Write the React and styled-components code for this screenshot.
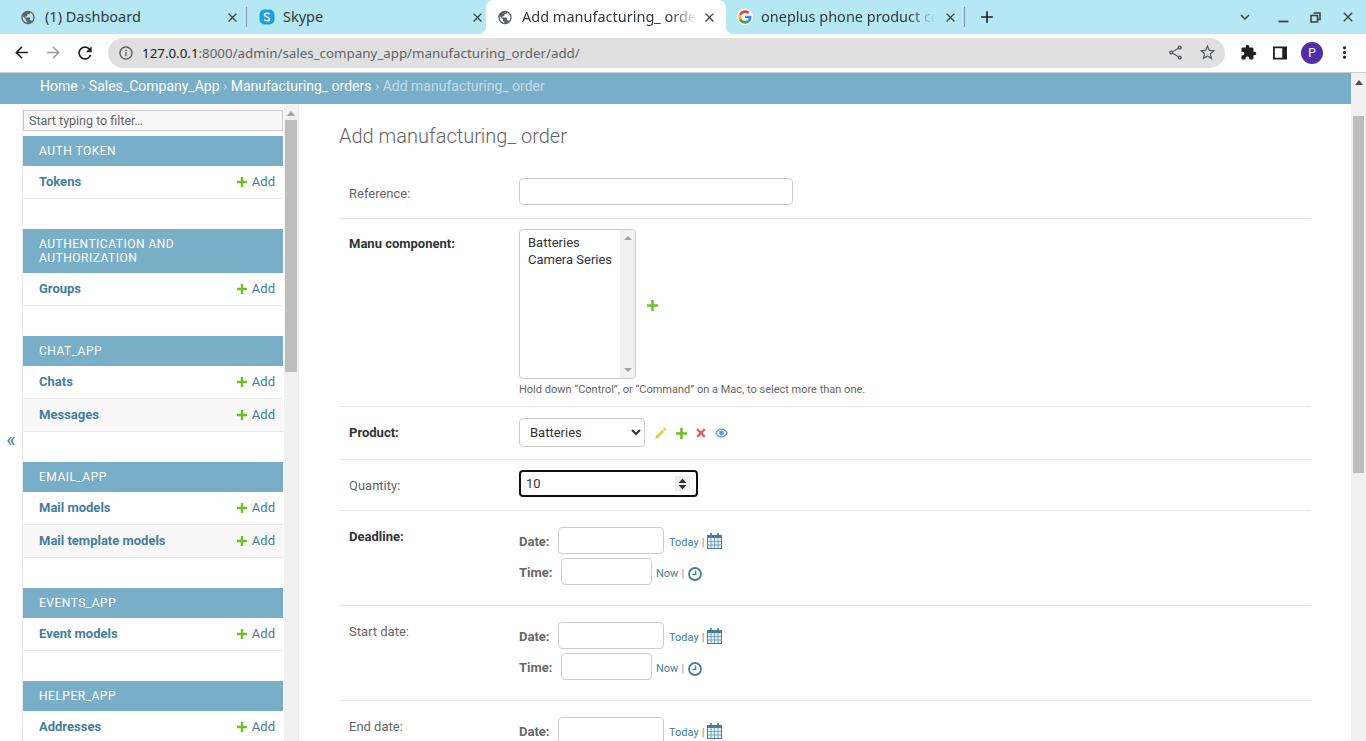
import React from "react";
import styled, { createGlobalStyle } from "styled-components";
import {
  MdArrowBack,
  MdArrowForward,
  MdRefresh,
  MdInfoOutline,
  MdOutlineShare,
  MdStarBorder,
  MdExtension,
  MdPublic,
  MdMoreVert,
  MdClose,
  MdAdd,
  MdExpandMore,
} from "react-icons/md";

const GlobalStyle = createGlobalStyle`
  html, body {
    margin: 0;
    height: 100%;
    overflow: hidden;
    background: #fff;
  }
  * {
    box-sizing: border-box;
  }
`;

const Screen = styled.div`
  width: 1366px;
  height: 741px;
  display: flex;
  flex-direction: column;
  overflow: hidden;
  font-family: Roboto, "Liberation Sans", sans-serif;
`;

/* browser chrome */
const TabStrip = styled.div`
  height: 34px;
  flex: none;
  display: flex;
  align-items: stretch;
  padding-left: 8px;
  background: #b6e8f4;
  font-family: "Noto Sans", "Open Sans", sans-serif;
`;

const Tab = styled.div`
  position: relative;
  width: 239px;
  display: flex;
  align-items: center;
  padding-left: ${(props) => props.inset || 12}px;
  color: #33383d;
  background: ${(props) => (props.active ? "#fff" : "transparent")};
  border-radius: ${(props) => (props.active ? "8px 8px 0 0" : "0")};
  ${(props) =>
    props.divider &&
    `
    &::after {
      content: "";
      position: absolute;
      right: 0;
      top: 7px;
      width: 1px;
      height: 20px;
      background: #7d9aa2;
    }
  `}
  ${(props) =>
    props.active &&
    `
    width: 240px;
    &::before, &::after {
      content: "";
      position: absolute;
      bottom: 0;
      width: 8px;
      height: 8px;
      background: radial-gradient(circle at 0 0, #b6e8f4 8px, #fff 8.5px);
    }
    &::before { left: -8px; }
    &::after { right: -8px; background: radial-gradient(circle at 100% 0, #b6e8f4 8px, #fff 8.5px); }
  `}
`;

const TabIcon = styled.span`
  width: 16px;
  height: 16px;
  flex: none;
  margin-right: ${(props) => props.gap || 9}px;
  display: flex;
  align-items: center;
  justify-content: center;
  color: #5f6368;
`;

const TabTitle = styled.span`
  width: ${(props) => props.width || 170}px;
  margin-top: -2px;
  font-size: 14.5px;
  white-space: nowrap;
  overflow: hidden;
  ${(props) =>
    props.fade &&
    `
    -webkit-mask-image: linear-gradient(to right, #000 85%, transparent 100%);
    mask-image: linear-gradient(to right, #000 85%, transparent 100%);
  `}
`;

const TabClose = styled.span`
  margin-left: auto;
  margin-right: ${(props) => props.right || 8}px;
  display: flex;
  color: #3c4043;
`;

const NewTab = styled.span`
  margin-left: 12px;
  display: flex;
  align-items: center;
  color: #202124;
`;

const WindowControls = styled.div`
  margin-left: auto;
  display: flex;
  align-items: center;
  color: #3c4043;
`;

const WindowButton = styled.span`
  width: ${(props) => props.width}px;
  display: flex;
  justify-content: center;
  align-items: center;
`;

const Toolbar = styled.div`
  height: 39px;
  flex: none;
  display: flex;
  align-items: center;
  padding: 0 0 1px 5px;
  background: #fff;
  border-bottom: 1px solid #c9cbcd;
`;

const NavButton = styled.span`
  width: 32px;
  display: flex;
  justify-content: center;
  color: ${(props) => (props.off ? "#9a9da0" : "#202124")};
`;

const AddressBar = styled.div`
  width: 1117px;
  height: 30px;
  margin-left: 7px;
  display: flex;
  align-items: center;
  padding: 0 8px 0 10px;
  border-radius: 15px;
  background: #e0e0e0;
  color: #5a5d61;
`;

const Url = styled.span`
  margin-left: 8px;
  font-family: "Noto Sans", "Open Sans", sans-serif;
  font-size: 13.35px;
  color: #5f6368;
  white-space: nowrap;
  b {
    font-weight: 400;
    color: #202124;
  }
`;

const BarIcons = styled.span`
  margin-left: auto;
  display: flex;
  align-items: center;
  gap: 14px;
`;

const ToolIcons = styled.div`
  display: flex;
  align-items: center;
  margin-left: 15px;
  color: #202124;
`;

const Avatar = styled.span`
  width: 22px;
  height: 22px;
  margin: 0 12px 0 13px;
  display: flex;
  align-items: center;
  justify-content: center;
  border-radius: 50%;
  background: #4f2ea8;
  color: #fff;
  font-size: 12px;
`;

/* page */
const Viewport = styled.div`
  flex: 1;
  min-height: 0;
  display: flex;
`;

const Page = styled.div`
  flex: 1;
  min-width: 0;
  display: flex;
  flex-direction: column;
`;

const Breadcrumbs = styled.div`
  height: 31px;
  flex: none;
  display: flex;
  align-items: center;
  padding: 0 40px 5px;
  background: #79aec8;
  font-size: 14px;
  color: #c4dce8;
  white-space: pre;
  a {
    color: #fff;
  }
`;

const Scrollbar = styled.div`
  width: ${(props) => props.width}px;
  flex: none;
  display: flex;
  flex-direction: column;
  align-items: center;
  background: ${(props) => props.track};
  padding-top: ${(props) => props.top}px;
`;

const ScrollArrow = styled.span`
  width: 0;
  height: 0;
  flex: none;
  border-left: 4px solid transparent;
  border-right: 4px solid transparent;
  border-bottom: 5px solid ${(props) => props.color};
`;

const ScrollThumb = styled.span`
  width: ${(props) => props.width}px;
  height: ${(props) => props.height}px;
  flex: none;
  margin-top: ${(props) => props.gap}px;
  background: #bdbdbd;
`;

const Columns = styled.div`
  flex: 1;
  min-height: 0;
  display: flex;
  overflow: hidden;
`;

const ToggleNav = styled.div`
  width: 23px;
  flex: none;
  display: flex;
  align-items: center;
  justify-content: center;
  padding-top: 34px;
  border-right: 1px solid #eaeaea;
  color: #447e9b;
  font-size: 20px;
  line-height: 1;
`;

const Sidebar = styled.div`
  width: 261px;
  flex: none;
  padding-top: 6px;
`;

const FilterInput = styled.input`
  display: block;
  width: 260px;
  height: 21px;
  margin-bottom: 5px;
  padding: 0 5px;
  border: 1px solid #ccc;
  background: #f8f8f8;
  font: 12.5px Roboto, sans-serif;
  &::placeholder {
    color: #666;
    opacity: 1;
  }
`;

const Module = styled.div`
  width: 260px;
  margin-bottom: 30px;
`;

const Caption = styled.div`
  padding: 8px 16px;
  background: #79aec8;
  color: #fff;
  font-size: 12px;
  line-height: 14px;
  letter-spacing: 0.5px;
  text-transform: uppercase;
`;

const ModelRow = styled.div`
  height: 33px;
  display: flex;
  align-items: center;
  justify-content: space-between;
  padding: 0 8px 1px 16px;
  border-bottom: 1px solid #e9e9e9;
  background: ${(props) => (props.shaded ? "#f8f8f8" : "#fff")};
  font-size: 13px;
  color: #447e9b;
`;

const ModelName = styled.span`
  font-weight: 700;
`;

const AddLink = styled.span`
  display: flex;
  align-items: center;
  gap: 4.5px;
`;

const SideBorder = styled.div`
  width: 1px;
  flex: none;
  background: #eaeaea;
`;

const Content = styled.div`
  flex: 1;
  min-width: 0;
  padding: 20px 40px 0;
  color: #333;
`;

const Title = styled.h1`
  margin: 0 0 19px;
  font-size: 20px;
  line-height: 24px;
  font-weight: 300;
  color: #666;
`;

const FormRow = styled.div`
  display: flex;
  height: ${(props) => props.height}px;
  padding: ${(props) => props.top}px 10px 0;
  border-bottom: 1px solid #e8e8e8;
  flex: none;
  &:last-child {
    border-bottom: 0;
  }
`;

const FieldLabel = styled.label`
  width: 170px;
  flex: none;
  padding-top: ${(props) => props.offset}px;
  font-size: 13px;
  line-height: 16px;
  font-weight: ${(props) => (props.required ? 700 : 400)};
  color: ${(props) => (props.required ? "#333" : "#666")};
`;

const TextInput = styled.input`
  display: block;
  width: ${(props) => props.width}px;
  height: ${(props) => props.height || 27}px;
  padding: 2px 8px;
  border: 1px solid #ccc;
  border-radius: 4px;
  background: #fff;
  outline: 0;
`;

const PickerBox = styled.div`
  display: flex;
  align-items: flex-start;
`;

const ListBox = styled.div`
  width: 117px;
  height: 150px;
  display: flex;
  justify-content: space-between;
  border: 1px solid #ccc;
  border-radius: 4px;
  overflow: hidden;
  font-size: 13px;
  color: #333;
`;

const ListOptions = styled.div`
  padding: 4px 8px;
  line-height: 17px;
  white-space: nowrap;
`;

const ListScroll = styled.div`
  width: 15px;
  display: flex;
  flex-direction: column;
  align-items: center;
  justify-content: space-between;
  padding: 6px 0;
  background: #f1f1f1;
`;

const ListArrow = styled.span`
  width: 0;
  height: 0;
  border-left: 4px solid transparent;
  border-right: 4px solid transparent;
  border-${(props) => (props.down ? "top" : "bottom")}: 4px solid #a3a3a3;
`;

const HelpText = styled.div`
  margin-top: 4px;
  font-size: 11px;
  line-height: 14px;
  color: #666;
`;

const RelatedIcon = styled.span`
  display: flex;
  flex: none;
  margin: ${(props) => props.margin || "0"};
`;

const SelectBox = styled.select`
  width: 126px;
  height: 29px;
  padding: 0 6px;
  border: 1px solid #ccc;
  border-radius: 4px;
  background: #fff;
  font: 13px Roboto, sans-serif;
  color: #333;
`;

const RelatedLinks = styled.div`
  display: flex;
  align-items: center;
  height: 29px;
  padding: 1px 0 0 10px;
  gap: 9px;
`;

const NumberBox = styled.div`
  width: 179px;
  height: 27px;
  display: flex;
  align-items: center;
  justify-content: space-between;
  padding: 0 6px 0 5px;
  border: 2px solid #101010;
  border-radius: 4px;
  font-size: 13px;
  color: #333;
`;

const Spinner = styled.span`
  width: 15px;
  height: 15px;
  display: flex;
  align-items: center;
  justify-content: center;
  background: #efefef;
`;

const DateTimeStack = styled.div`
  display: flex;
  flex-direction: column;
  gap: 4px;
  padding-top: 5px;
`;

const DateLine = styled.div`
  display: flex;
  align-items: center;
  height: 27px;
`;

const DateLabel = styled.span`
  width: ${(props) => props.width}px;
  flex: none;
  padding-top: 2px;
  font-size: 13px;
  font-weight: 700;
  color: #666;
`;

const Shortcut = styled.span`
  margin-left: ${(props) => props.gap}px;
  display: flex;
  align-items: center;
  font-size: 11px;
  padding-top: 4px;
  color: #447e9b;
  i {
    margin: 0 3px;
    font-style: normal;
    color: #888;
  }
`;

/* django admin's little drawings */
function PlusIcon({ size = 10 }) {
  return (
    <svg width={size} height={size} viewBox="0 0 10 10">
      <path d="M3.8 0h2.4v3.8H10v2.4H6.2V10H3.8V6.2H0V3.8h3.8z" fill="#70bf2b" />
    </svg>
  );
}

function PencilIcon() {
  return (
    <svg width="12" height="12" viewBox="0 0 12 12">
      <path d="M9.3 .3l2.4 2.4-1.3 1.3L8 1.600z" fill="#efb80b" opacity=".85" />
      <path d="M7.300 2.300l2.400 2.400-6 6-3.400 1 1-3.400z" fill="#efb80b" opacity=".85" />
      <path d="M2.200 8.200l6-6M3.800 9.800l6-6" stroke="#fff" strokeWidth=".5" />
    </svg>
  );
}

function DeleteIcon() {
  return (
    <svg width="10" height="10" viewBox="0 0 10 10">
      <path d="M2 .3L5 3.3 8 .3 9.7 2 6.7 5l3 3L8 9.7l-3-3-3 3L.3 8l3-3-3-3z" fill="#dd4646" opacity=".85" />
    </svg>
  );
}

function EyeIcon() {
  return (
    <svg width="13" height="10" viewBox="0 0 13 10">
      <path d="M6.5 0.5C3.6.5 1.3 2.4.2 5c1.1 2.6 3.4 4.5 6.3 4.5s5.2-1.9 6.3-4.5C11.7 2.4 9.4.5 6.5.5zm0 1.3c2.1 0 3.9 1.3 4.9 3.2-1 1.9-2.8 3.2-4.9 3.2S2.6 6.9 1.6 5c1-1.9 2.8-3.2 4.9-3.2z" fill="#5f97d8" />
      <circle cx="6.5" cy="5" r="2.4" fill="#5f97d8" />
    </svg>
  );
}

function CalendarIcon() {
  return (
    <RelatedIcon margin="-3px 0 0 0">
      <svg width="15" height="16" viewBox="0 0 15 16">
        <rect x=".5" y="2.5" width="14" height="13" fill="#e4eef3" stroke="#447e9b" />
        <rect x="0" y="2" width="15" height="3" fill="#447e9b" />
        <path d="M4 0v3.500M11 0v3.500" stroke="#447e9b" strokeWidth="1.6" />
        <path d="M4 5v10M7.500 5v10M11 5v10M.5 8.500h14M.5 12h14" stroke="#447e9b" strokeWidth=".6" />
      </svg>
    </RelatedIcon>
  );
}

function ClockIcon() {
  return (
    <svg width="14" height="14" viewBox="0 0 14 14">
      <circle cx="7" cy="7" r="6" fill="#fff" stroke="#447e9b" strokeWidth="1.8" />
      <path d="M7.6 3.4v4H4.4" fill="none" stroke="#447e9b" strokeWidth="1.4" />
    </svg>
  );
}

function SkypeIcon() {
  return (
    <svg width="16" height="16" viewBox="0 0 16 16">
      <rect x="0.5" y="0.5" width="15" height="15" rx="5" fill="#1a9fe0" />
      <path d="M10.6 5.2C10 4.5 9.1 4.2 8 4.2c-1.5 0-2.6.8-2.6 1.9 0 2.5 5.2 1.4 5.2 3.8 0 1.1-1.1 1.9-2.6 1.9-1.2 0-2.1-.4-2.8-1.2" fill="none" stroke="#fff" strokeWidth="1.5" />
    </svg>
  );
}

function GoogleIcon() {
  return (
    <svg width="16" height="16" viewBox="0 0 48 48">
      <circle cx="24" cy="24" r="24" fill="#fff" />
      <path fill="#ea4335" d="M24 12c3 0 5.700 1 7.800 3l5.800-5.800C34 5.900 29.400 4 24 4 16.200 4 9.500 8.500 6.200 15l6.800 5.300C14.600 15.400 18.900 12 24 12z" />
      <path fill="#4285f4" d="M43.500 24.500c0-1.400-.1-2.700-.4-4H24v7.600h11c-.5 2.500-1.900 4.600-4 6l6.500 5c3.800-3.500 6-8.700 6-14.600z" />
      <path fill="#fbbc05" d="M13 27.700c-.4-1.200-.6-2.400-.6-3.700s.2-2.500.6-3.700L6.200 15C4.800 17.700 4 20.800 4 24s.8 6.300 2.200 9z" />
      <path fill="#34a853" d="M24 44c5.400 0 9.900-1.800 13.500-4.900l-6.500-5c-1.800 1.200-4.200 2-7 2-5.100 0-9.400-3.400-11-8.400L6.200 33C9.500 39.500 16.200 44 24 44z" />
    </svg>
  );
}

function SidePanelIcon() {
  return (
    <svg width="16" height="16" viewBox="0 0 16 16">
      <path d="M1 1.500h14v13H1zM2.800 3.300v9.400h7.400V3.300z" fill="#202124" fillRule="evenodd" />
    </svg>
  );
}

function RestoreIcon() {
  return (
    <svg width="11" height="11" viewBox="0 0 11 11">
      <path d="M3.500 1h6.500v6.500H7.500M1 3.500h6.500V10H1z" fill="none" stroke="#3c4043" strokeWidth="1.600" />
    </svg>
  );
}

function MinimizeIcon() {
  return (
    <svg width="11" height="11" viewBox="0 0 11 11">
      <path d="M.5 9.500h10" stroke="#3c4043" strokeWidth="1.800" />
    </svg>
  );
}

function SpinArrows() {
  return (
    <svg width="9" height="12" viewBox="0 0 9 12">
      <path d="M4.500 .5l4 4.500H.5zM4.500 11.500l4-4.500H.5z" fill="#333" />
    </svg>
  );
}

const modules = [
  { name: "Auth Token", rows: ["Tokens"] },
  { name: "Authentication and Authorization", rows: ["Groups"] },
  { name: "Chat_App", rows: ["Chats", "Messages"] },
  { name: "Email_App", rows: ["Mail models", "Mail template models"] },
  { name: "Events_App", rows: ["Event models"] },
  { name: "Helper_App", rows: ["Addresses"] },
];

const dateRows = [
  { label: "Deadline:", required: true, height: 95 },
  { label: "Start date:", height: 95 },
  { label: "End date:", height: 95 },
];

function DateTimeRow({ label, required, height }) {
  return (
    <FormRow height={height} top={11}>
      <FieldLabel required={required} offset={7}>{label}</FieldLabel>
      <DateTimeStack>
        <DateLine>
          <DateLabel width={39}>Date:</DateLabel>
          <TextInput width={106} />
          <Shortcut gap={5}>Today<i>|</i><CalendarIcon /></Shortcut>
        </DateLine>
        <DateLine>
          <DateLabel width={42}>Time:</DateLabel>
          <TextInput width={91} />
          <Shortcut gap={4}>Now<i>|</i><RelatedIcon margin="0 0 0 1px"><ClockIcon /></RelatedIcon></Shortcut>
        </DateLine>
      </DateTimeStack>
    </FormRow>
  );
}

function BrowserChrome() {
  return (
    <>
      <TabStrip>
        <Tab divider>
          <TabIcon><MdPublic size={17} /></TabIcon>
          <TabTitle>(1) Dashboard</TabTitle>
          <TabClose right={7}><MdClose size={15} /></TabClose>
        </Tab>
        <Tab>
          <TabIcon gap={8}><SkypeIcon /></TabIcon>
          <TabTitle>Skype</TabTitle>
          <TabClose right={1}><MdClose size={15} /></TabClose>
        </Tab>
        <Tab active inset={11}>
          <TabIcon><MdPublic size={17} /></TabIcon>
          <TabTitle width={175} fade>Add manufacturing_ order</TabTitle>
          <TabClose right={9}><MdClose size={15} /></TabClose>
        </Tab>
        <Tab divider inset={11}>
          <TabIcon gap={8}><GoogleIcon /></TabIcon>
          <TabTitle width={175} fade>oneplus phone product comparison</TabTitle>
          <TabClose right={7}><MdClose size={15} /></TabClose>
        </Tab>
        <NewTab><MdAdd size={20} /></NewTab>
        <WindowControls>
          <WindowButton width={42}><MdExpandMore size={18} /></WindowButton>
          <WindowButton width={34}><MinimizeIcon /></WindowButton>
          <WindowButton width={30}><RestoreIcon /></WindowButton>
          <WindowButton width={36}><MdClose size={16} /></WindowButton>
        </WindowControls>
      </TabStrip>
      <Toolbar>
        <NavButton><MdArrowBack size={19} /></NavButton>
        <NavButton off><MdArrowForward size={19} /></NavButton>
        <NavButton><MdRefresh size={20} /></NavButton>
        <AddressBar>
          <MdInfoOutline size={16} />
          <Url><b>127.0.0.1</b>:8000/admin/sales_company_app/manufacturing_order/add/</Url>
          <BarIcons>
            <MdOutlineShare size={17} />
            <MdStarBorder size={19} />
          </BarIcons>
        </AddressBar>
        <ToolIcons>
          <RelatedIcon margin="0 15px 0 0"><MdExtension size={17} /></RelatedIcon>
          <SidePanelIcon />
          <Avatar>P</Avatar>
          <MdMoreVert size={19} />
        </ToolIcons>
      </Toolbar>
    </>
  );
}

function App() {
  return (
    <Screen>
      <GlobalStyle />
      <BrowserChrome />
      <Viewport>
        <Page>
          <Breadcrumbs>
            <a>Home</a> › <a>Sales_Company_App</a> › <a>Manufacturing_ orders</a> › Add manufacturing_ order
          </Breadcrumbs>
          <Columns>
            <ToggleNav>«</ToggleNav>
            <Sidebar>
              <FilterInput placeholder="Start typing to filter…" />
              {modules.map((mod) => (
                <Module key={mod.name}>
                  <Caption>{mod.name}</Caption>
                  {mod.rows.map((row, index) => (
                    <ModelRow key={row} shaded={index % 2 === 1}>
                      <ModelName>{row}</ModelName>
                      <AddLink><PlusIcon />Add</AddLink>
                    </ModelRow>
                  ))}
                </Module>
              ))}
            </Sidebar>
            <Scrollbar width={14} track="#f1f1f1" top={7}>
              <ScrollArrow color="#a3a3a3" />
              <ScrollThumb width={12} height={252} gap={4} />
            </Scrollbar>
            <SideBorder />
            <Content>
              <Title>Add manufacturing_ order</Title>
              <FormRow height={52} top={11}>
                <FieldLabel offset={8}>Reference:</FieldLabel>
                <TextInput width={274} height={27} />
              </FormRow>
              <FormRow height={188} top={10}>
                <FieldLabel required offset={7}>Manu component:</FieldLabel>
                <div>
                  <PickerBox>
                    <ListBox>
                      <ListOptions>Batteries<br />Camera Series</ListOptions>
                      <ListScroll>
                        <ListArrow />
                        <ListArrow down />
                      </ListScroll>
                    </ListBox>
                    <RelatedIcon margin="71px 0 0 11px"><PlusIcon size={11} /></RelatedIcon>
                  </PickerBox>
                  <HelpText>Hold down “Control”, or “Command” on a Mac, to select more than one.</HelpText>
                </div>
              </FormRow>
              <FormRow height={53} top={11}>
                <FieldLabel required offset={7}>Product:</FieldLabel>
                <SelectBox defaultValue="Batteries">
                  <option>Batteries</option>
                  <option>Camera Series</option>
                </SelectBox>
                <RelatedLinks>
                  <PencilIcon />
                  <PlusIcon size={11} />
                  <DeleteIcon />
                  <EyeIcon />
                </RelatedLinks>
              </FormRow>
              <FormRow height={51} top={10}>
                <FieldLabel offset={8}>Quantity:</FieldLabel>
                <NumberBox>
                  10
                  <Spinner><SpinArrows /></Spinner>
                </NumberBox>
              </FormRow>
              {dateRows.map((row) => (
                <DateTimeRow key={row.label} {...row} />
              ))}
            </Content>
          </Columns>
        </Page>
        <Scrollbar width={15} track="#f1f1f1" top={7}>
          <ScrollArrow color="#505050" />
          <ScrollThumb width={11} height={357} gap={31} />
        </Scrollbar>
      </Viewport>
    </Screen>
  );
}

export default App;
